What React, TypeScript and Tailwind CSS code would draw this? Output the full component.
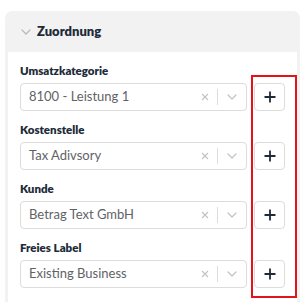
import React from "react";

const rows = [
  { label: "Umsatzkategorie", value: "8100 - Leistung 1" },
  { label: "Kostenstelle", value: "Tax Adivsory" },
  { label: "Kunde", value: "Betrag Text GmbH" },
  { label: "Freies Label", value: "Existing Business" },
];

function Chevron({ className }: { className?: string }) {
  return (
    <svg width="10" height="6" viewBox="0 0 10 6" className={className} fill="none">
      <path d="M1 1l4 4 4-4" stroke="currentColor" strokeWidth="1.2" strokeLinecap="round" strokeLinejoin="round" />
    </svg>
  );
}

export default function App() {
  return (
    <div
      className="relative w-[301px] h-[302px] bg-white overflow-hidden pt-[11px] pl-[5px] pr-[1px]"
      style={{ fontFamily: "Lato, 'Noto Sans', sans-serif" }}
    >
      <div className="h-[300px] rounded-t-[7px] bg-[#f2f2f2] px-[3px] flex flex-col">
        <div className="h-[41px] flex items-center pl-[13px] gap-[6px] shrink-0">
          <Chevron className="text-[#b5b9bd]" />
          <span className="text-[13px] font-extrabold text-[#1d2b3a]">Zuordnung</span>
        </div>
        <div className="flex-1 bg-white pl-[12px] pt-[11px] flex flex-col gap-[11px]">
          {rows.map((r) => (
            <div key={r.label} className="flex flex-col gap-[4px]">
              <div className="h-[16px] leading-[16px] text-[11.5px] font-extrabold text-[#1d2b3a]">{r.label}</div>
              <div className="flex items-center gap-[7px]">
                <div className="w-[227px] h-[28px] rounded-[4px] border border-[#dcdcdc] bg-white flex items-center pl-[8px]">
                  <span className="flex-1 text-[13px] text-[#5f6367]">{r.value}</span>
                  <span className="w-[14px] flex justify-center text-[#c2c2c2]">
                    <svg width="8" height="8" viewBox="0 0 8 8">
                      <path d="M1 1l6 6M7 1L1 7" stroke="currentColor" strokeWidth="1.1" />
                    </svg>
                  </span>
                  <span className="ml-[5px] w-px h-[16px] bg-[#dcdcdc]" />
                  <span className="w-[28px] flex justify-center">
                    <Chevron className="text-[#c2c2c2]" />
                  </span>
                </div>
                <button className="w-[31px] h-[28px] rounded-[4px] border border-[#dcdcdc] bg-white flex items-center justify-center">
                  <svg width="12" height="12" viewBox="0 0 12 12">
                    <path d="M6 0.5v11M0.5 6h11" stroke="#1d2b3a" strokeWidth="1.8" />
                  </svg>
                </button>
              </div>
            </div>
          ))}
        </div>
      </div>
      <div className="absolute left-[251px] top-[75px] w-[46px] h-[223px] border-2 border-[#e3131b]" />
    </div>
  );
}
